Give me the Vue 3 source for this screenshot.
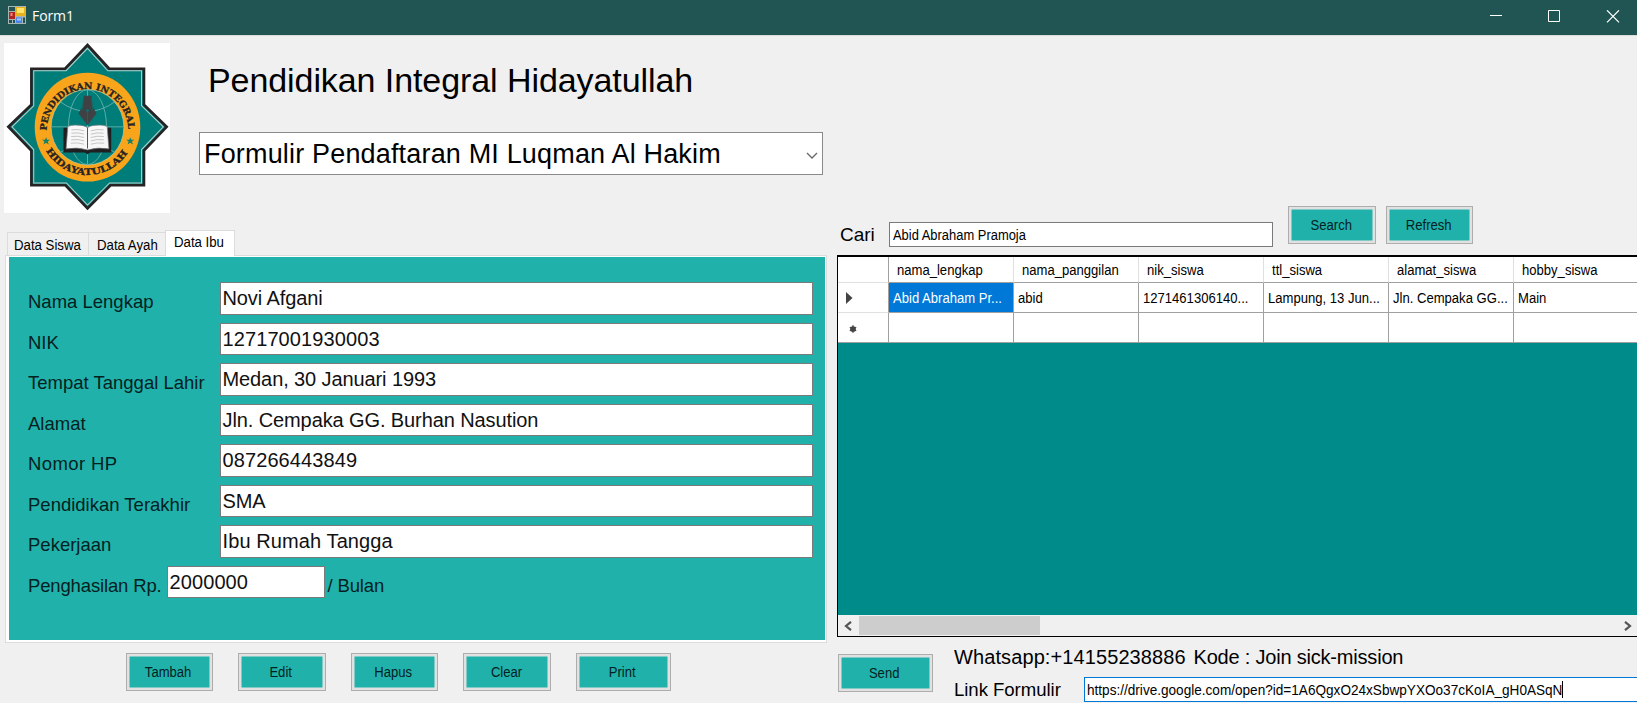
<script setup>
const tabs = ['Data Siswa', 'Data Ayah', 'Data Ibu']
const fields = [
  { label: 'Nama Lengkap', value: 'Novi Afgani' },
  { label: 'NIK', value: '12717001930003', digits: true },
  { label: 'Tempat Tanggal Lahir', value: 'Medan, 30 Januari 1993' },
  { label: 'Alamat', value: 'Jln. Cempaka GG. Burhan Nasution' },
  { label: 'Nomor HP', value: '087266443849', digits: true, spaced: true },
  { label: 'Pendidikan Terakhir', value: 'SMA' },
  { label: 'Pekerjaan', value: 'Ibu Rumah Tangga', digits: true }
]
const actions = ['Tambah', 'Edit', 'Hapus', 'Clear', 'Print']
const columns = ['nama_lengkap', 'nama_panggilan', 'nik_siswa', 'ttl_siswa', 'alamat_siswa', 'hobby_siswa']
const record = ['Abid Abraham Pr...', 'abid', '1271461306140...', 'Lampung, 13 Jun...', 'Jln. Cempaka GG...', 'Main']
</script>

<template>
  <div class="window">
    <header class="titlebar">
      <svg class="app-icon" width="18" height="18" viewBox="0 0 18 18">
        <rect width="18" height="18" fill="#a9b5b5" />
        <rect x="1" y="1" width="6" height="4" fill="#215553" />
        <rect x="1" y="6" width="6" height="7" fill="#b3261e" />
        <rect x="2.500" y="7" width="2" height="3" fill="#f08a80" />
        <rect x="8" y="1" width="9" height="9" fill="#e8b21c" />
        <rect x="9" y="2" width="7" height="5" fill="#ffe36b" />
        <rect x="1" y="14" width="3" height="3" fill="#215553" />
        <rect x="5" y="14" width="2" height="3" fill="#215553" />
        <rect x="8" y="11.500" width="6" height="5.500" fill="#4a86e8" />
        <rect x="9" y="12.500" width="4" height="2" fill="#a8c8ff" />
        <rect x="15" y="11.500" width="2" height="5.500" fill="#215553" />
      </svg>
      <span class="caption">Form1</span>
      <svg class="controls" width="130" height="14" viewBox="0 0 130 14" fill="none" stroke="#fff">
        <path d="M0 5.500h12M58.500.500h11v11h-11z" />
        <path d="M117 .300l12 12M129 .300l-12 12" stroke-width="1.200" />
      </svg>
    </header>

    <main class="client">
      <section class="left">
        <div class="banner">
          <svg class="logo" viewBox="12 22 497 509" preserveAspectRatio="none">
            <defs>
              <path id="arc-top" d="M140 284A122 124 0 0 1 384 284" />
              <path id="arc-bottom" d="M138 344A143 146 0 0 0 386 344" />
            </defs>
            <rect x="12" y="22" width="497" height="509" fill="#fff" />
            <path class="star" d="M262 28L327 99H431V207L499 273L431 344V448H331L262 517L196 448H94V344L25 273L94 207V99H195Z" />
            <path class="star-line" d="M262 38L323 105H424V210L489 273L424 341V441H328L262 507L199 441H101V341L36 273L101 210V105H198Z" />
            <ellipse cx="262" cy="274" rx="158" ry="163" fill="#f8a51b" />
            <ellipse cx="262" cy="274" rx="109" ry="113" fill="#007d79" stroke="#b9cfb0" stroke-width="2" />
            <g fill="none" stroke="#6fb5ad" stroke-width="2.500">
              <ellipse cx="262" cy="274" rx="57" ry="112" />
              <path d="M262 162V386M153 273H371M180 198Q262 256 344 198M180 350Q262 294 344 350" />
            </g>
            <path d="M251 180h23l4 32 11 21-27 35-27-35 11-21z" fill="#3e4245" />
            <path d="M262 226v36M250 190l-4 34M274 190l4 34" stroke="#0a7370" stroke-width="2" />
            <circle cx="262" cy="224" r="4" fill="#0a7370" />
            <path d="M190 276h143v74h-63l-8 5-8-5h-64z" fill="#1f1f21" />
            <path d="M203 273q8-6 29-5 22 0 30 8 8-8 30-8 21-1 29 5l5 66q-34-6-64 3-30-9-64-3z" fill="#f7f7f7" stroke="#77797b" stroke-width="2" />
            <path d="M262 276v62" stroke="#555" stroke-width="3" />
            <path class="book-lines" d="M214 282q22-3 38 3M214 292q22-3 38 3M213 302q22-3 39 3M213 312q22-3 39 3M212 322q22-3 40 3M272 285q18-6 38-3M272 295q18-6 38-3M272 305q18-6 39-3M272 315q18-6 39-3M272 325q18-6 40-3" />
            <path d="M138 304l3 8h9l-7 5 3 9-8-5-8 5 3-9-7-5h9zM390 304l3 8h9l-7 5 3 9-8-5-8 5 3-9-7-5h9z" fill="#14806c" />
            <text class="ring-text"><textPath href="#arc-top" textLength="382" lengthAdjust="spacingAndGlyphs">PENDIDIKAN INTEGRAL</textPath></text>
            <text class="ring-text"><textPath href="#arc-bottom" textLength="294" lengthAdjust="spacingAndGlyphs">HIDAYATULLAH</textPath></text>
          </svg>
          <div class="heading">
            <h1>Pendidikan Integral Hidayatullah</h1>
            <div class="combo">
              <span>Formulir Pendaftaran MI Luqman Al Hakim</span>
              <svg width="12" height="8" viewBox="0 0 12 8" fill="none" stroke="#666" stroke-width="1.300"><path d="M1 1l5 5 5-5" /></svg>
            </div>
          </div>
        </div>

        <nav class="tabs">
          <div v-for="(t, i) in tabs" :key="t" class="tab" :class="['tab-' + i, { active: i === 2 }]"><span class="small">{{ t }}</span></div>
        </nav>
        <div class="page">
          <div class="form">
            <div v-for="f in fields" :key="f.label" class="field">
              <label :class="{ spaced: f.spaced }">{{ f.label }}</label>
              <div class="input" :class="{ digits: f.digits }">{{ f.value }}</div>
            </div>
            <div class="field income">
              <label>Penghasilan Rp.</label>
              <div class="input digits">2000000</div>
              <label class="unit">/ Bulan</label>
            </div>
          </div>
        </div>
        <div class="actions">
          <div v-for="a in actions" :key="a" class="btn" :class="{ wide: a === 'Print' }"><span class="small">{{ a }}</span></div>
        </div>
      </section>

      <section class="right">
        <div class="search">
          <span class="cari">Cari</span>
          <div class="query"><span class="small">Abid Abraham Pramoja</span></div>
          <div class="btn first"><span class="small">Search</span></div>
          <div class="btn"><span class="small">Refresh</span></div>
        </div>
        <div class="datagrid">
          <div class="row head">
            <div class="cell rowhead"></div>
            <div v-for="c in columns" :key="c" class="cell"><span class="small">{{ c }}</span></div>
          </div>
          <div class="row">
            <div class="cell rowhead"><svg width="7" height="12" viewBox="0 0 7 12"><path d="M0 0l6.500 6L0 12z" fill="#444" /></svg></div>
            <div v-for="(v, i) in record" :key="v" class="cell" :class="{ selected: i === 0 }"><span class="small">{{ v }}</span></div>
          </div>
          <div class="row">
            <div class="cell rowhead new"><svg width="8" height="8" viewBox="0 0 8 8" stroke="#444" stroke-width="1.300"><circle cx="4" cy="4" r="2.200" fill="#444" /><path d="M4 .300v7.400M.800 2.200l6.400 3.600M7.200 2.200L.800 5.800" /></svg></div>
            <div v-for="c in columns" :key="c" class="cell"></div>
          </div>
          <div class="empty"></div>
          <div class="scrollbar">
            <svg width="8" height="10" viewBox="0 0 8 10" fill="none" stroke="#555" stroke-width="2.200"><path d="M7 .800L2 5l5 4.200" /></svg>
            <div class="thumb"></div>
            <svg class="next" width="8" height="10" viewBox="0 0 8 10" fill="none" stroke="#555" stroke-width="2.200"><path d="M1 .800L6 5 1 9.200" /></svg>
          </div>
        </div>
        <div class="send">
          <div class="btn wide"><span class="small">Send</span></div>
          <div class="share">
            <div class="wa"><span class="number">Whatsapp:+14155238886</span><span class="code">Kode : Join sick-mission</span></div>
            <div class="link">
              <span class="link-label">Link Formulir</span>
              <div class="url"><span class="small">https://drive.google.com/open?id=1A6QgxO24xSbwpYXOo37cKoIA_gH0ASqN</span><i class="caret"></i></div>
            </div>
          </div>
        </div>
      </section>
    </main>
  </div>
</template>

<style>
body { margin: 0; overflow: hidden; }
</style>

<style scoped>
* { box-sizing: border-box; }
.window { width: 1637px; height: 703px; overflow: hidden; background: #f0f0f0; color: #000; font-family: "Liberation Sans", Arial, sans-serif; white-space: nowrap; }
.titlebar { height: 35px; background: #215553; display: flex; padding: 0 14px 0 8px; }
.app-icon { margin-top: 6px; }
.caption { margin-left: 6px; color: #fff; font: 14px/32px "Open Sans", sans-serif; letter-spacing: -.1px; }
.controls { margin: 10px 3px 0 auto; }
.client { display: grid; grid-template-columns: 837px 800px; height: 668px; border-top: 1px solid #dcdcdc; }
.left, .right { display: flex; flex-direction: column; min-width: 0; }

.banner { display: flex; height: 194px; padding: 6px 0 0 4px; }
.logo { width: 166px; height: 170px; display: block; margin-top: .5px; }
.star { fill: #007d79; stroke: #272325; stroke-width: 8; }
.star-line { fill: none; stroke: #b8cfcc; stroke-width: 3; }
.book-lines { fill: none; stroke: #bbb; stroke-width: 2.5; }
.ring-text { font: bold 27px "DejaVu Serif", serif; fill: #272325; stroke: #272325; stroke-width: 1; }
.heading { margin-left: 29px; width: 624px; }
h1 { margin: 18px 0 0 9px; font-size: 34px; font-weight: 400; line-height: 40px; letter-spacing: -.08px; }
.combo { margin-top: 32px; height: 43px; border: 1px solid #8a8a8a; background: #fff; display: flex; align-items: center; justify-content: space-between; padding: 1px 4px 0 4px; font-size: 27px; letter-spacing: .17px; }
.combo svg { margin-top: 3px; }

.small { display: inline-block; font-size: 14.7px; line-height: 18px; transform: scaleX(.89); transform-origin: 0 50%; }
.tabs { display: flex; align-items: flex-end; height: 26px; padding-left: 7px; position: relative; z-index: 1; }
.tab { height: 23px; border: 1px solid #dcdcdc; border-bottom: 0; padding: 3px 0 0 6px; margin-bottom: 1px; }
.tab .small { transform: scaleX(.9); }
.tab-0 { width: 82px; }
.tab-1 { width: 77px; border-left: 0; padding-left: 8px; }
.tab-2 { width: 70px; margin-left: -1px; height: 26px; margin-bottom: 0; background: #fff; padding: 2px 0 0 8px; }
.page { margin: -1px 0 0 5px; width: 822px; height: 388px; border: 1px solid #dcdcdc; background: #fff; padding: 1px 1px 2px 3px; }
.form { background: #20b2aa; height: 383px; padding: 25px 0 0 19px; }
.field { display: flex; height: 40.5px; }
.field label { width: 191.5px; padding-top: 9px; font-size: 18.5px; line-height: 22px; color: #04211f; }
.field .spaced { letter-spacing: .4px; }
.input { width: 593px; height: 32.5px; border: 1px solid #7a7a7a; background: #fff; padding: 0 0 0 2px; font-size: 20px; line-height: 30px; color: #111; letter-spacing: -.1px; }
.digits { letter-spacing: .1px; }
.field.income label { width: 138.5px; letter-spacing: -.15px; }
.income .input { width: 158px; }
.field.income .unit { width: 70px; padding-left: 3px; }
.actions { display: flex; gap: 25px; margin: 10px 0 0 125.5px; }
.btn { flex: none; width: 87.6px; height: 38px; border: 1px solid #adadad; background: #20b2aa; box-shadow: inset 0 0 0 2.5px #e1e1e1; display: flex; align-items: center; justify-content: center; color: #04211f; padding-right: 2px; }
.btn .small { transform-origin: 50% 50%; }
.wide { width: 95px; }

.search { display: flex; height: 219px; padding-top: 170px; }
.cari { width: 48px; margin-left: 3px; padding-top: 18px; font-size: 19px; line-height: 22px; }
.query { width: 384px; height: 25px; margin: 16px 0 0 1px; border: 1px solid #7a7a7a; background: #fff; padding: 3px 0 0 3px; }
.query .small { transform: scaleX(.88); }
.first { margin: 0 10px 0 15px; }
.datagrid { width: 820px; height: 382px; border: 1px solid #000; border-top-width: 2px; background: #008b8b; display: flex; flex-direction: column; flex: none; }
.row { display: flex; height: 30px; flex: none; background: #fff; }
.cell { flex: none; width: 125px; border-right: 1px solid #a0a0a0; border-bottom: 1px solid #a0a0a0; padding: 6px 0 0 4px; }
.rowhead { width: 51px; border-bottom-color: #e0e0e0; padding: 9px 0 0 8px; }
.rowhead svg { display: block; }
.row:nth-child(3) .rowhead { border-bottom-color: #a0a0a0; }
.row .new { padding: 12px 0 0 11px; }
.head { height: 26px; }
.head .cell { border-right-color: #e0e0e0; padding: 4px 0 0 8px; }
.head .cell.rowhead { border-right-color: #a0a0a0; }
.selected { background: #0078d7; color: #fff; }
.empty { flex: 1; }
.scrollbar { height: 21px; background: #f0f0f0; display: flex; align-items: center; padding: 0 24px 0 6px; }
.thumb { width: 181px; height: 19px; background: #cdcdcd; margin-left: 7px; }
.next { margin-left: auto; }
.send { display: flex; padding: 17px 0 0 1px; }
.share { margin-left: 21px; }
.wa { display: flex; font-size: 20px; line-height: 24px; margin-top: -9px; }
.number { width: 239.5px; letter-spacing: .1px; }
.code { letter-spacing: -.2px; }
.link { display: flex; margin-top: 8px; }
.link-label { width: 130px; font-size: 18.6px; line-height: 25px; letter-spacing: -.05px; }
.url { width: 570px; height: 25px; border: 1px solid #0078d7; background: #fff; padding: 3px 0 0 2px; position: relative; }
.url .small { transform: scaleX(.925); }
.caret { position: absolute; left: 477px; top: 3px; width: 1px; height: 17px; background: #000; }
</style>
